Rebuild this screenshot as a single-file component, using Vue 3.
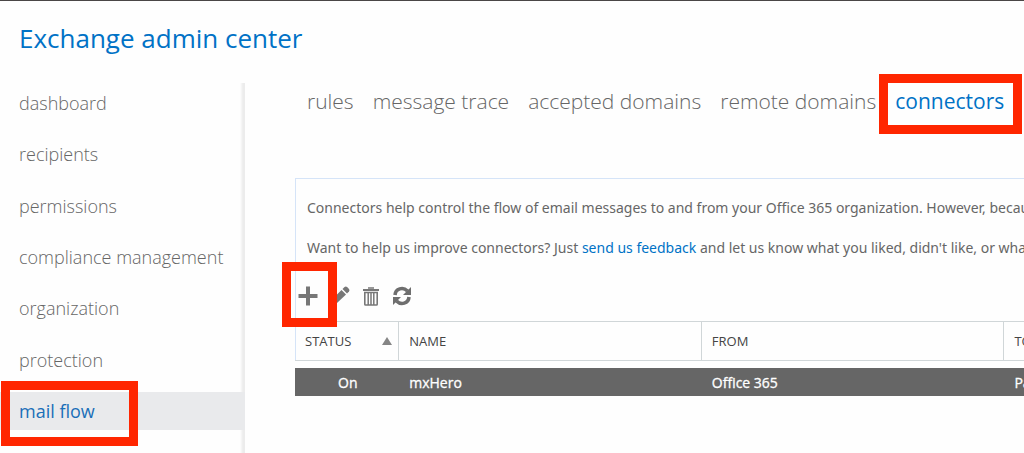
<script setup>
const sections = [
  'dashboard',
  'recipients',
  'permissions',
  'compliance management',
  'organization',
  'protection',
  'mail flow',
]
const activeSection = 'mail flow'

const tabs = ['rules', 'message trace', 'accepted domains', 'remote domains', 'connectors']
const activeTab = 'connectors'

const connectors = [{ status: 'On', name: 'mxHero', from: 'Office 365', to: 'Partner' }]
</script>

<template>
  <div class="page">
    <header class="top">
      <h1>Exchange admin center</h1>
    </header>

    <div class="body">
      <nav class="side" aria-label="Sections">
        <a
          v-for="s in sections"
          :key="s"
          href="#"
          class="side-link"
          :class="{ active: s === activeSection }"
        >{{ s }}<span v-if="s === activeSection" class="mark mark-side"></span></a>
      </nav>

      <main class="main">
        <nav class="tabs" aria-label="Mail flow">
          <a
            v-for="t in tabs"
            :key="t"
            href="#"
            class="tab"
            :class="{ active: t === activeTab }"
          >{{ t }}<span v-if="t === activeTab" class="mark mark-tab"></span></a>
        </nav>

        <section class="panel">
          <div class="intro">
            <p>Connectors help control the flow of email messages to and from your Office 365 organization. However, because</p>
            <p>Want to help us improve connectors? Just <a href="#">send us feedback</a> and let us know what you liked, didn't like, or what</p>
          </div>

          <div class="tools">
            <button type="button" aria-label="Add">
              <svg width="20" height="20" viewBox="0 0 20 20"><path d="M10 0.5V19.5M0.5 10H19.5" stroke="#777" stroke-width="4" fill="none" /></svg>
              <span class="mark mark-tool"></span>
            </button>
            <button type="button" aria-label="Edit">
              <svg width="20" height="20" viewBox="0 0 20 20" fill="#777"><path d="M1 19l1.500-6L11.500 4l4.500 4.500-9.500 9z" /><path d="M12.500 3l2-2q1.300-1 2.600 0l1.900 1.900q1 1.300 0 2.600L17 7.500z" /></svg>
            </button>
            <button type="button" aria-label="Delete">
              <svg width="18" height="20" viewBox="0 0 18 20" fill="none" stroke="#777"><path d="M1 4h16" stroke-width="2" /><path d="M6 2h6" stroke-width="1.500" /><path d="M2.800 6.500h12.400v11.700q0 .8-.8.800H3.600q-.8 0-.8-.800z" stroke-width="1.600" /><path d="M6.200 7v12M9 7v12M11.800 7v12" stroke-width="1.500" /></svg>
            </button>
            <button type="button" aria-label="Refresh">
              <svg width="20" height="20" viewBox="0 0 20 20"><path d="M3 9C3.500 2.500 11 .5 15.500 5M17 11C16.500 17.500 9 19.500 4.500 15" fill="none" stroke="#6e6e6e" stroke-width="3.600" /><path d="M19 1v8h-8zM1 19v-8h8z" fill="#6e6e6e" /></svg>
            </button>
          </div>

          <table>
            <colgroup>
              <col class="c-status" />
              <col class="c-wide" />
              <col class="c-wide" />
              <col class="c-wide" />
            </colgroup>
            <thead>
              <tr>
                <th scope="col">
                  <div class="sorted">
                    STATUS
                    <svg width="10" height="8" viewBox="0 0 10 8"><path d="M5 0L10 8H0z" fill="#858585" /></svg>
                  </div>
                </th>
                <th scope="col">NAME</th>
                <th scope="col">FROM</th>
                <th scope="col">TO</th>
              </tr>
            </thead>
            <tbody>
              <tr v-for="c in connectors" :key="c.name">
                <td class="status">{{ c.status }}</td>
                <td>{{ c.name }}</td>
                <td>{{ c.from }}</td>
                <td>{{ c.to }}</td>
              </tr>
            </tbody>
          </table>
        </section>
      </main>
    </div>
  </div>
</template>

<style>
body {
  margin: 0;
  background: #fefefe;
}
</style>

<style scoped>
.page {
  display: flex;
  flex-direction: column;
  box-sizing: border-box;
  min-height: 100vh;
  overflow: hidden;
  border-top: 1px solid #4a4646;
  font-family: "Open Sans", "Noto Sans", sans-serif;
  color: #666;
}
a {
  color: #0072c6;
  text-decoration: none;
}
.top {
  padding: 19px 19px 27px;
}
h1 {
  margin: 0;
  font-size: 26px;
  line-height: 36px;
  font-weight: 400;
  color: #0072c6;
}
.body {
  display: grid;
  grid-template-columns: 245px minmax(0, 1fr);
  flex: 1;
}
.side {
  display: flex;
  flex-direction: column;
  justify-content: space-between;
  padding: 1px 0 23px;
  background: linear-gradient(to left, #ececec 2px, #f8f8f8 4px, transparent 5px);
}
.side-link {
  position: relative;
  padding-left: 19px;
  font-size: 18px;
  line-height: 38px;
  font-weight: 300;
  color: #666;
}
.side-link.active {
  background: #e9eaec;
  font-weight: 400;
  color: #1a6fb8;
}
.mark {
  position: absolute;
  z-index: 1;
  box-sizing: border-box;
  border: 9px solid #ff2600;
  pointer-events: none;
}
.mark-side {
  left: 1px;
  top: -11px;
  width: 137px;
  height: 65px;
}
.main {
  padding-left: 50px;
}
.tabs {
  display: flex;
  gap: 19px;
  padding-left: 12px;
  white-space: nowrap;
}
.tab {
  position: relative;
  font-size: 21px;
  line-height: 36px;
  font-weight: 300;
  color: #666;
}
.tab.active {
  font-weight: 400;
  color: #0072c6;
}
.mark-tab {
  left: -16px;
  right: -18px;
  top: -9px;
  height: 60px;
}
.panel {
  margin-top: 59px;
  border-top: 1px solid #d5e4f8;
  background: linear-gradient(#d5e4f8, #d5e4f8) left top / 1px 182px no-repeat;
}
.intro {
  display: flex;
  flex-direction: column;
  gap: 20px;
  padding: 19px 0 0 12px;
  font-family: "Noto Sans", "Open Sans", sans-serif;
  font-size: 14px;
  line-height: 20px;
  white-space: nowrap;
}
.intro p {
  margin: 0;
}
.tools {
  display: flex;
  gap: 12px;
  padding: 28px 3px 15px;
}
button {
  position: relative;
  display: flex;
  padding: 0;
  border: 0;
  background: none;
}
.mark-tool {
  left: -16px;
  top: -24px;
  width: 55px;
  height: 65px;
}
table {
  table-layout: fixed;
  width: 1012px;
  border-spacing: 0;
}
.c-status {
  width: 104px;
}
.c-wide {
  width: 302px;
}
th,
td {
  padding: 0 10px;
  text-align: left;
}
th {
  border: solid #d0d6d8;
  border-width: 1px 1px 1px 0;
  font-size: 13px;
  line-height: 38px;
  font-weight: 400;
  color: #444;
}
.sorted {
  display: flex;
  align-items: center;
  justify-content: space-between;
  margin-right: -4px;
}
tbody::before {
  content: "";
  display: block;
  height: 7px;
}
td {
  padding-top: 1px;
  background: #666;
  font-size: 14px;
  line-height: 27px;
  color: #fff;
  -webkit-text-stroke: 0.3px #fff;
}
.status {
  padding-left: 43px;
}
</style>
